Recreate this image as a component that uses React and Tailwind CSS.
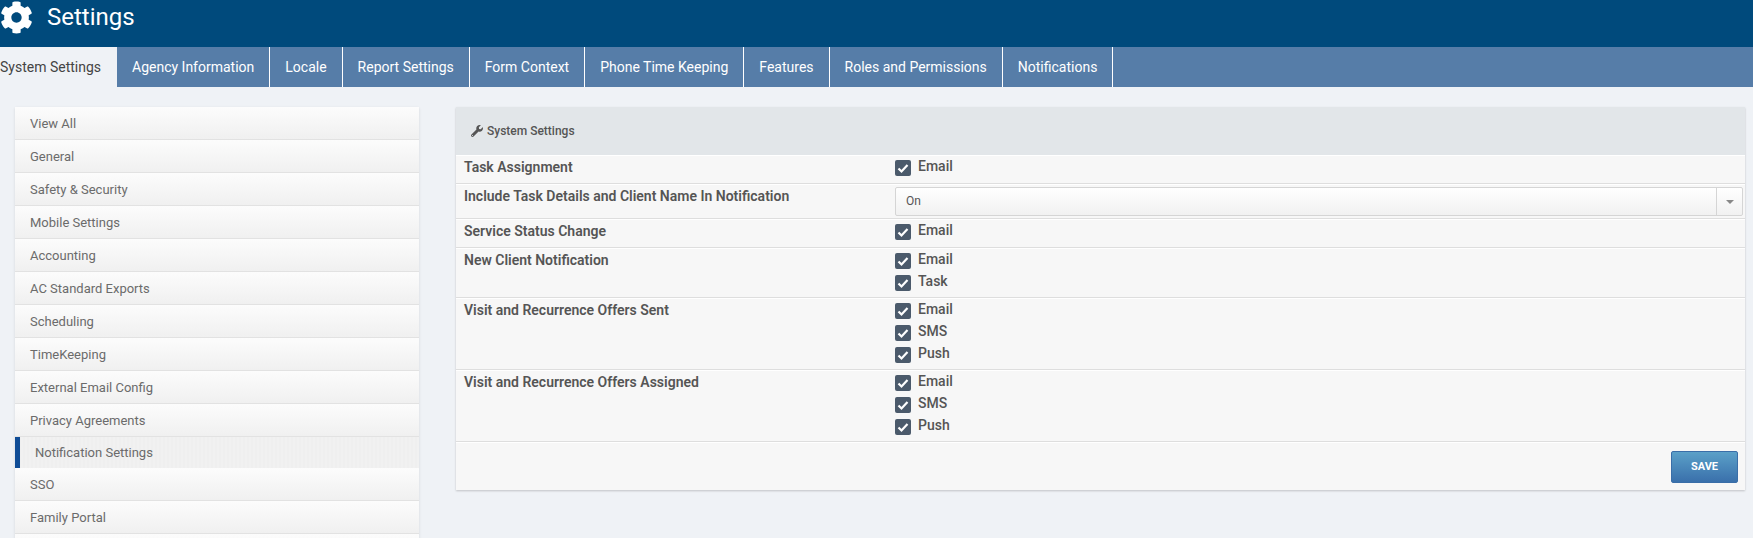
import { FaCog, FaWrench } from 'react-icons/fa'

// top tabs, first one is the open one
const tabs = [
  'Agency Information',
  'Locale',
  'Report Settings',
  'Form Context',
  'Phone Time Keeping',
  'Features',
  'Roles and Permissions',
  'Notifications',
]

// last entry is blank, only its top edge shows above the fold
const sideItems = [
  'View All',
  'General',
  'Safety & Security',
  'Mobile Settings',
  'Accounting',
  'AC Standard Exports',
  'Scheduling',
  'TimeKeeping',
  'External Email Config',
  'Privacy Agreements',
  'Notification Settings',
  'SSO',
  'Family Portal',
  '',
]

const rows = [
  { label: 'Task Assignment', checks: ['Email'], pad: 'pt-[3px] pb-[2px]' },
  { label: 'Include Task Details and Client Name In Notification', select: 'On', pad: 'pt-[2px] pb-[2px]' },
  { label: 'Service Status Change', checks: ['Email'], pad: 'pt-[3px] pb-[2px]' },
  { label: 'New Client Notification', checks: ['Email', 'Task'], pad: 'pt-[3px] pb-[1px]' },
  { label: 'Visit and Recurrence Offers Sent', checks: ['Email', 'SMS', 'Push'], pad: 'pt-[3px] pb-[1px]' },
  { label: 'Visit and Recurrence Offers Assigned', checks: ['Email', 'SMS', 'Push'], pad: 'pt-[3px] pb-[1px]' },
]

function Check({ label }) {
  return (
    <div className="flex h-[22px] items-start">
      <span className="mt-[1px] flex h-4 w-4 items-center justify-center rounded-[2px] bg-[#4b5a6b]">
        <svg viewBox="0 0 16 16" className="h-4 w-4" fill="none" stroke="#ffffff" strokeWidth="2.2">
          <path d="M3.5 8.5l3 3 6-6.5" />
        </svg>
      </span>
      <span className="ml-[7px] text-[14px] leading-[14px] font-medium text-[#555555]">{label}</span>
    </div>
  )
}

function SelectBox({ value }) {
  return (
    <div className="flex h-[29px] items-stretch rounded-[2px] border border-[#d5d5d5] bg-gradient-to-b from-[#ffffff] to-[#f1f1f1]">
      <span className="flex-1 pl-[10px] text-[12px] leading-[27px] text-[#555555]">{value}</span>
      <span className="flex w-[26px] items-center justify-center border-l border-[#d5d5d5]">
        <span className="h-0 w-0 border-x-[4px] border-t-[4px] border-x-transparent border-t-[#888888]" />
      </span>
    </div>
  )
}

export default function App() {
  return (
    <div className="h-[538px] overflow-hidden bg-[#eff2f6] font-['Roboto',sans-serif]">

      {/* header */}
      <div className="flex h-[47px] items-start bg-[#004a7c] text-white">
        <FaCog className="mt-[1px] h-[33px] w-[33px]" />
        <span className="ml-[14px] text-[24px] leading-[34px]">Settings</span>
      </div>

      {/* tabs */}
      <div className="flex h-10 bg-[#567da8] text-[14px] leading-[40px]">
        <div className="w-[117px] bg-[#eff2f6] text-[#444444]">System Settings</div>
        {tabs.map((t) => (
          <div key={t} className="border-r border-white px-[15px] text-white">{t}</div>
        ))}
      </div>

      <div className="flex items-start gap-[37px] pt-5 pr-2 pl-[15px]">

        {/* left menu */}
        <div className="w-[404px] shrink-0 shadow-sm">
          {sideItems.map((item, i) =>
            item === 'Notification Settings' ? (
              <div
                key={i}
                className="h-[31px] border-l-[5px] border-[#0f4c96] bg-[repeating-linear-gradient(90deg,#eeeeee_0px,#f2f2f2_2px,#eeeeee_4px)] pl-[15px] text-[13px] leading-[31px] text-[#6b6b6b]"
              >
                {item}
              </div>
            ) : (
              <div
                key={i}
                className="h-[33px] border-b border-[#e2e2e2] bg-gradient-to-b from-[#fcfcfc] to-[#f0f0f0] pl-[15px] text-[13px] leading-[33px] text-[#6b6b6b]"
              >
                {item}
              </div>
            )
          )}
        </div>

        {/* settings panel */}
        <div className="flex-1 bg-[#f7f7f7] shadow-[0_1px_2px_rgba(0,0,0,0.2)]">
          <div className="flex h-12 items-center gap-[4px] bg-[#e2e6e9] pl-[15px] text-[12px] font-medium text-[#555555]">
            <FaWrench className="h-3 w-3 text-[#555555]" />
            <span>System Settings</span>
          </div>

          {rows.map((row) => (
            <div key={row.label} className="flex border-t border-b border-t-white border-b-[#dedede]">
              <div className="w-[439px] shrink-0 pt-[1px] pl-2 text-[14px] leading-[20px] font-semibold text-[#555555]">
                {row.label}
              </div>
              <div className={`flex-1 pr-[2px] ${row.pad}`}>
                {row.select ? <SelectBox value={row.select} /> : row.checks.map((c) => <Check key={c} label={c} />)}
              </div>
            </div>
          ))}

          <div className="flex justify-end border-t border-white pt-[8px] pr-[7px] pb-[7px]">
            <button className="h-8 w-[67px] rounded-[2px] border border-[#3a6ea8] bg-gradient-to-b from-[#5ba0c8] to-[#3a70ab] text-[11px] font-bold text-white">
              SAVE
            </button>
          </div>
        </div>
      </div>
    </div>
  )
}
